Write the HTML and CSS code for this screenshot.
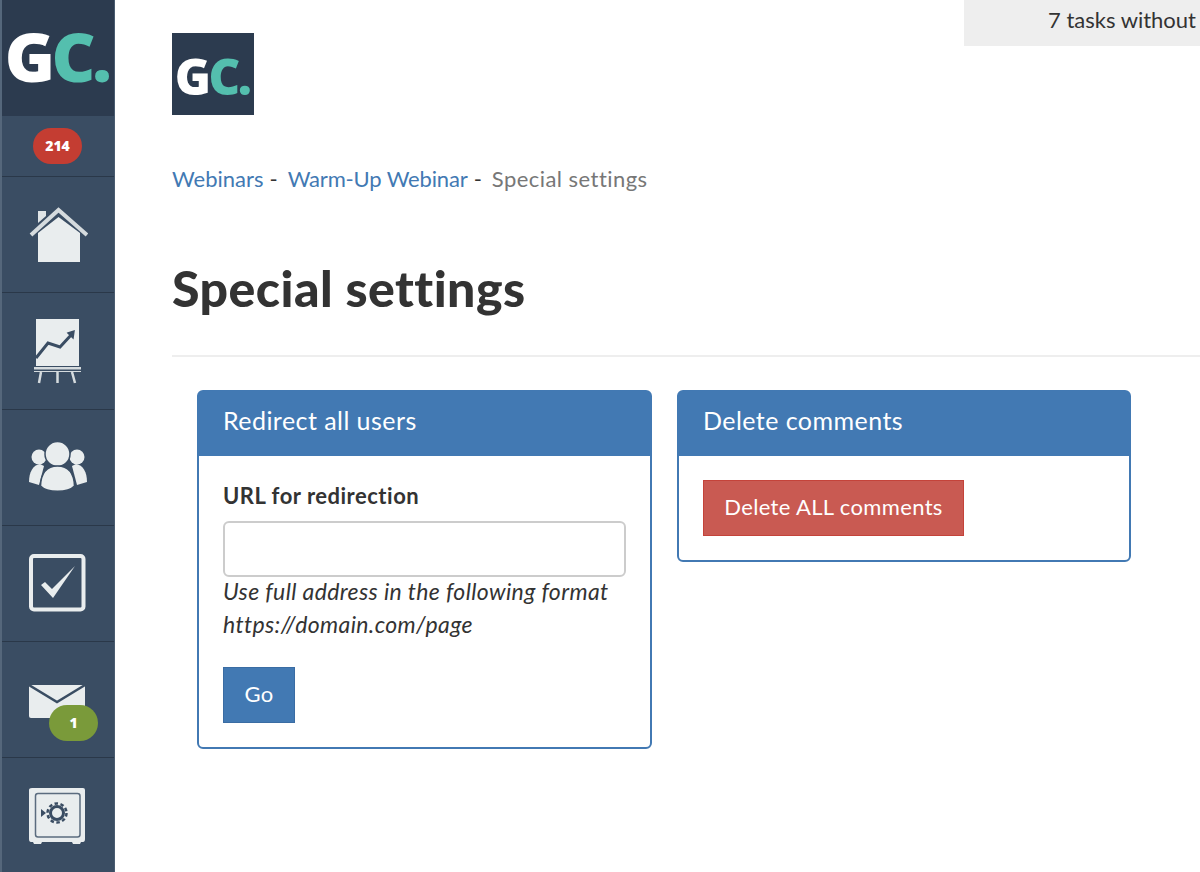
FILE: index.html
```html
<!DOCTYPE html>
<html lang="en">
<head>
<meta charset="utf-8">
<title>Special settings</title>
<link rel="stylesheet" href="styles.css">
</head>
<body>
<div class="app">
  <nav class="sidebar">
    <div class="brand"><span class="gc-g">G</span><span class="gc-c">C.</span></div>
    <div class="nav-row nav-count"><span class="pill pill-red">214</span></div>
    <div class="nav-row">
      <svg class="icon" width="59" height="70" viewBox="29 200 59 70">
        <path d="M38 233 L58.500 217 L80 233 V262 H38 Z" fill="#e9edee"/>
        <path d="M38 211 H46 V216 L38 223 Z" fill="#dfe4e6"/>
        <path d="M31 235 L58.500 210 L87 235" fill="none" stroke="#d5dbde" stroke-width="4"/>
      </svg>
    </div>
    <div class="nav-row">
      <svg class="icon" width="59" height="70" viewBox="29 316 59 70">
        <rect x="36" y="319" width="43" height="47" fill="#e9edee"/>
        <path d="M36 358 L48 343 L60 347 L72 334" fill="none" stroke="#3a4d63" stroke-width="3"/>
        <path d="M68 333 L74 331 L73 338 Z" fill="#3a4d63" stroke="#3a4d63" stroke-width="1.500"/>
        <rect x="34" y="367" width="47" height="2.500" fill="#d5dbde"/>
        <path d="M34 371.500 H81" stroke="#d5dbde" stroke-width="1"/>
        <path d="M41 372 L39 383 M57.500 372 V383 M72 372 L75 383" stroke="#d5dbde" stroke-width="2.500" fill="none"/>
      </svg>
    </div>
    <div class="nav-row">
      <svg class="icon" width="59" height="70" viewBox="29 433 59 70">
        <circle cx="39" cy="458" r="7.500" fill="#e9edee"/>
        <circle cx="77" cy="458" r="7.500" fill="#e9edee"/>
        <path d="M29 483 C29 473 33 466 40 465 L44 467 L39 486 Z" fill="#e9edee"/>
        <path d="M87 483 C87 473 83 466 76 465 L72 467 L77 486 Z" fill="#e9edee"/>
        <circle cx="57.500" cy="455" r="12.500" fill="#e9edee" stroke="#3a4d63" stroke-width="1.500"/>
        <path d="M40.500 487 C41 474 47 467 57.500 467 C68 467 74 474 74.500 487 C68 494 47 494 40.500 487 Z" fill="#e9edee" stroke="#3a4d63" stroke-width="1.500"/>
      </svg>
    </div>
    <div class="nav-row">
      <svg class="icon" width="59" height="70" viewBox="29 549 59 70">
        <rect x="31" y="557" width="52.500" height="53.500" rx="3" fill="none" stroke="#e9edee" stroke-width="4"/>
        <path d="M41 586 L45 583 L52 590 L75 567 L53 599 Z" fill="#e9edee"/>
      </svg>
    </div>
    <div class="nav-row nav-mail">
      <svg class="icon" width="59" height="70" viewBox="29 665 59 70">
        <path d="M29 685 H85 V716 Q85 718 83 718 H31 Q29 718 29 716 Z" fill="#e9edee"/>
        <path d="M29 685 L57 702 L85 685" fill="none" stroke="#3a4d63" stroke-width="2.500"/>
      </svg>
      <span class="pill pill-green">1</span>
    </div>
    <div class="nav-row">
      <svg class="icon" width="59" height="70" viewBox="29 781 59 70">
        <path d="M32 788 H83 Q85 788 85 790 V839 Q85 842 83 842 H81 L80 844 H73 L72 842 H42 L41 844 H34 L33 842 H31 Q29 842 29 839 V790 Q29 788 32 788 Z" fill="#e9edee"/>
        <rect x="35.500" y="793.500" width="44.500" height="43.500" rx="2.500" fill="none" stroke="#5b6c7f" stroke-width="1.500"/>
        <circle cx="57" cy="813" r="6.500" fill="none" stroke="#3a4d63" stroke-width="3"/>
        <circle cx="57" cy="813" r="9.500" fill="none" stroke="#3a4d63" stroke-width="2.500" stroke-dasharray="3.500 2.500"/>
        <path d="M41 809 L46 813 L41 817 Z" fill="#3a4d63"/>
      </svg>
    </div>
  </nav>
  <main class="content">
    <div class="topline">
      <div class="page-logo"><span class="gc-g">G</span><span class="gc-c">C.</span></div>
      <div class="tasks-tab">7 tasks without</div>
    </div>
    <div class="breadcrumbs"><a href="#">Webinars</a><span class="sep">-</span><a class="crumb-tight" href="#">Warm-Up Webinar</a><span class="sep">-</span><span class="current">Special settings</span></div>
    <h1 class="title">Special settings</h1>
    <hr class="rule">
    <div class="panels">
      <section class="panel">
        <h2 class="panel-head">Redirect all users</h2>
        <div class="panel-body">
          <label class="field-label" for="url">URL for redirection</label>
          <input class="field-input" id="url" type="text">
          <p class="hint">Use full address in the following format https://domain.com/page</p>
          <button class="btn btn-blue" type="button">Go</button>
        </div>
      </section>
      <section class="panel panel-narrow">
        <h2 class="panel-head">Delete comments</h2>
        <div class="panel-body">
          <button class="btn btn-red" type="button">Delete ALL comments</button>
        </div>
      </section>
    </div>
  </main>
</div>
</body>
</html>
```
FILE: styles.css
```css
* { box-sizing: border-box; }
html, body { margin: 0; height: 100%; overflow: hidden; }
body { font-family: Lato, "Liberation Sans", sans-serif; color: #333; background: #fff; }
.app { display: flex; height: 872px; }

.sidebar { flex: 0 0 115px; display: flex; flex-direction: column; background: #3a4d63; border-left: 2px solid #55677b; border-right: 1px solid #4a5c70; overflow: hidden; }
.brand { flex: none; height: 116px; margin-left: -2px; margin-right: -1px; background: #2c3b4f; border-left: 2px solid #3f5064; display: flex; align-items: center; justify-content: center; font: 800 68px/1 "Open Sans", sans-serif; letter-spacing: -3.500px; padding: 0 4px 4px 0; }
.gc-g { color: #fff; }
.gc-c { color: #54bfae; }
.nav-row { position: relative; flex: none; height: 116.250px; display: flex; align-items: center; justify-content: center; border-bottom: 1px solid #2a3849; }
.nav-count { height: 61px; align-items: flex-start; padding: 12px 1px 0 0; }
.icon { display: block; }
.pill { display: inline-flex; align-items: center; justify-content: center; width: 49px; height: 36px; border-radius: 18px; color: #fff; font: 800 14px/1 "Open Sans", sans-serif; }
.pill-red { background: #c43d32; }
.pill-green { background: #7a9a3a; position: absolute; left: 47px; top: 63px; }

.content { flex: 1; min-width: 0; }
.topline { display: flex; justify-content: space-between; align-items: flex-start; height: 115px; padding-left: 57px; }
.page-logo { width: 82px; height: 82px; margin-top: 33px; background: #2c3b4f; display: flex; align-items: center; justify-content: center; font: 800 49px/1 "Open Sans", sans-serif; letter-spacing: -2.500px; padding: 5px 2px 0 0; }
.tasks-tab { width: 236px; height: 46px; background: #eee; font-size: 22px; line-height: 40px; text-align: right; padding-right: 4px; white-space: nowrap; }

.breadcrumbs { margin: 49px 0 0 57px; font-size: 22px; line-height: 30px; color: #777; }
.breadcrumbs a { color: #4279b3; text-decoration: none; }
.crumb-tight { letter-spacing: -0.150px; }
.current { letter-spacing: 0.450px; }
.sep { color: #333; margin: 0 10px 0 6px; }
.title { margin: 64px 0 0 57px; font-size: 50px; line-height: 60px; font-weight: 900; letter-spacing: 0.450px; color: #333; }
.rule { margin: 37px 0 0 57px; border: 0; border-top: 2px solid #eee; }

.panels { display: flex; align-items: flex-start; gap: 25px; margin: 33px 0 0 82px; }
.panel { width: 455px; border: 2px solid #4279b3; border-radius: 6px; background: #fff; }
.panel-narrow { width: 454px; }
.panel-head { margin: 0; height: 64px; padding: 0 24px; background: #4279b3; color: #fff; font-size: 25px; line-height: 57px; font-weight: 400; letter-spacing: 0.450px; }
.panel-body { padding: 24px; }
.field-label { display: block; font-size: 22px; line-height: 30px; font-weight: 700; margin-top: 1px; letter-spacing: 0.500px; }
.field-input { display: block; width: 403px; height: 56px; margin-top: 10px; border: 2px solid #ccc; border-radius: 6px; background: #fff; }
.hint { margin: -2px 0 26px; width: 403px; font-size: 23px; line-height: 33px; font-style: italic; letter-spacing: 0.380px; }
.btn { display: block; height: 56px; padding: 0 0 2px; border-width: 1px; border-style: solid; border-radius: 0; color: #fff; font: 400 22px/1 Lato, sans-serif; letter-spacing: 0.350px; }
.btn-blue { width: 72px; background: #4279b3; border-color: #3a6ca3; }
.btn-red { width: 261px; background: #c95a52; border-color: #c4433a; }
```
